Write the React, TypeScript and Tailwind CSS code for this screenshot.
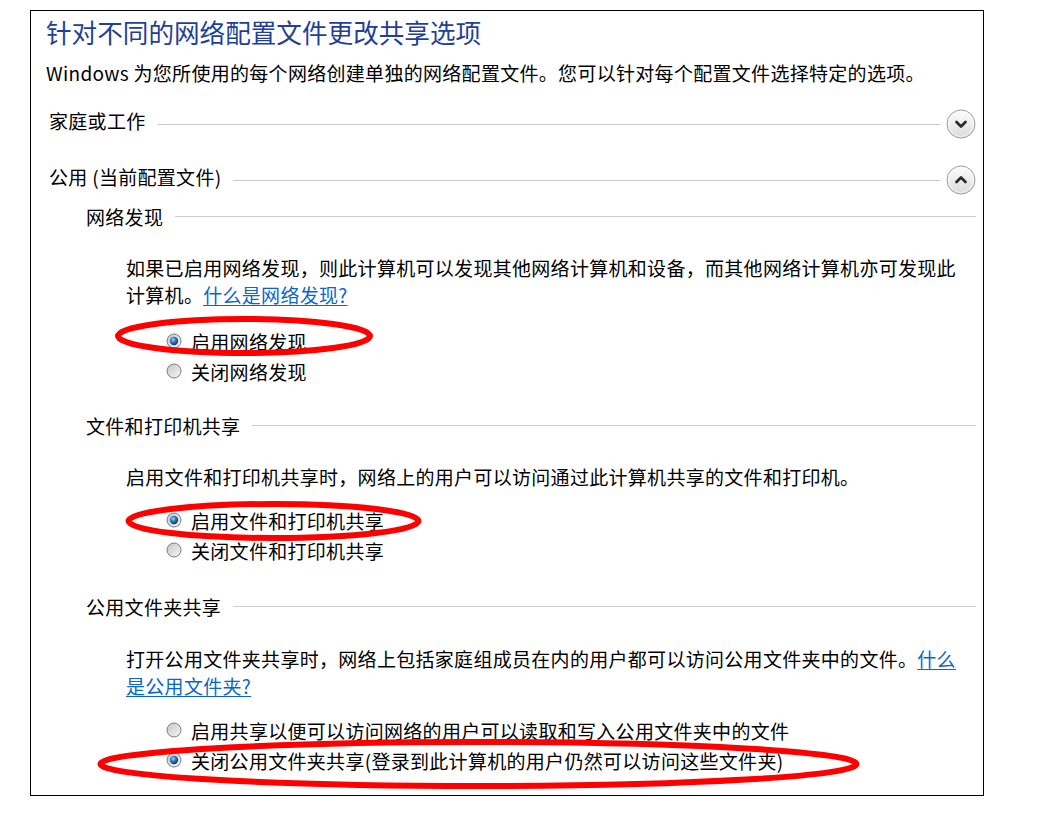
import React from 'react'

const font = { fontFamily: '"Noto Sans CJK SC", "Noto Sans", sans-serif' }

// 圆形折叠按钮
function Chevron({ up }: { up?: boolean }) {
    return (
        <svg width="30" height="30" viewBox="0 0 30 30" className="shrink-0">
            <defs>
                <linearGradient id={up ? 'cg-up' : 'cg-down'} x1="0" y1="0" x2="0" y2="1">
                    <stop offset="0" stopColor="#ffffff" />
                    <stop offset="1" stopColor="#d9d9d9" />
                </linearGradient>
            </defs>
            <circle cx="15" cy="15" r="14" fill={`url(#${up ? 'cg-up' : 'cg-down'})`} stroke="#9d9d9d" strokeWidth="1" />
            <circle cx="15" cy="15" r="12.5" fill="none" stroke="#ffffff" strokeWidth="1" opacity="0.8" />
            <path
                d={up ? 'M10.5 17 L15 12.5 L19.5 17' : 'M10.5 13 L15 17.5 L19.5 13'}
                fill="none"
                stroke="#2b2b2b"
                strokeWidth="2.8"
                strokeLinecap="round"
                strokeLinejoin="round"
            />
        </svg>
    )
}

function Radio({ checked }: { checked?: boolean }) {
    const id = checked ? 'rb-on' : 'rb-off'
    return (
        <svg width="16" height="16" viewBox="0 0 16 16" className="shrink-0">
            <defs>
                <linearGradient id={id} x1="0" y1="0" x2="1" y2="1">
                    <stop offset="0" stopColor="#c4c4c4" />
                    <stop offset="1" stopColor="#f8f8f8" />
                </linearGradient>
                <radialGradient id="rb-dot" cx="0.4" cy="0.35" r="0.7">
                    <stop offset="0" stopColor="#9ad6f7" />
                    <stop offset="0.45" stopColor="#2a7cbd" />
                    <stop offset="1" stopColor="#0b2f58" />
                </radialGradient>
            </defs>
            <circle cx="8" cy="8" r="7" fill={`url(#${id})`} stroke="#7c7c7c" strokeWidth="1" />
            {checked && <circle cx="8" cy="8" r="4.2" fill="url(#rb-dot)" />}
        </svg>
    )
}

function ProfileHeader({ label, up }: { label: string; up?: boolean }) {
    return (
        <div className="flex items-center h-[32px] pl-[3px]">
            <span className="leading-[27px] -mt-[8px]">{label}</span>
            <div className="flex-1 h-px bg-[#c9c9c9] ml-3 mr-[6px]" />
            <Chevron up={up} />
        </div>
    )
}

function SubHeader({ label, className }: { label: string; className?: string }) {
    return (
        <div className={`flex items-center h-[27px] pl-[40px] ${className ?? ''}`}>
            <span className="leading-[27px]">{label}</span>
            <div className="flex-1 h-px bg-[#cfcfcf] ml-3" />
        </div>
    )
}

function RadioRow({ label, checked }: { label: string; checked?: boolean }) {
    return (
        <div className="flex items-center h-[30px] pl-[120px] gap-[9px]">
            <Radio checked={checked} />
            <span className="leading-[27px] whitespace-nowrap">{label}</span>
        </div>
    )
}

export default function App() {
    return (
        <div className="relative w-[1063px] h-[834px] pt-[10px] bg-white text-black text-[19px] tracking-[0.3px]" style={font}>
            <div className="ml-[30px] w-[954px] h-[786px] border border-black">
                <div className="pl-[15px] pr-[7px] pt-[4px]">
                    <h1 className="text-[25.6px] leading-[34px] tracking-normal text-[#1f3f99] font-normal">针对不同的网络配置文件更改共享选项</h1>
                    <p className="mt-[10px] leading-[27px] whitespace-nowrap">
                        Windows 为您所使用的每个网络创建单独的网络配置文件。您可以针对每个配置文件选择特定的选项。
                    </p>

                    <div className="mt-[22px]">
                        <ProfileHeader label="家庭或工作" />
                    </div>
                    <div className="mt-[24px]">
                        <ProfileHeader label="公用 (当前配置文件)" up />
                    </div>

                    {/* 网络发现 */}
                    <SubHeader label="网络发现" className="mt-[7px]" />
                    <p className="mt-[24px] pl-[80px] leading-[27px] whitespace-nowrap">
                        如果已启用网络发现，则此计算机可以发现其他网络计算机和设备，而其他网络计算机亦可发现此
                        <br />
                        计算机。<span className="text-[#0a66c8] underline underline-offset-2">什么是网络发现?</span>
                    </p>
                    <div className="mt-[18px]">
                        <RadioRow label="启用网络发现" checked />
                        <RadioRow label="关闭网络发现" />
                    </div>

                    {/* 文件和打印机共享 */}
                    <SubHeader label="文件和打印机共享" className="mt-[26px]" />
                    <p className="mt-[24px] pl-[80px] leading-[27px] whitespace-nowrap">
                        启用文件和打印机共享时，网络上的用户可以访问通过此计算机共享的文件和打印机。
                    </p>
                    <div className="mt-[15px]">
                        <RadioRow label="启用文件和打印机共享" checked />
                        <RadioRow label="关闭文件和打印机共享" />
                    </div>

                    {/* 公用文件夹共享 */}
                    <SubHeader label="公用文件夹共享" className="mt-[28px]" />
                    <p className="mt-[25px] pl-[80px] leading-[27px] whitespace-nowrap">
                        打开公用文件夹共享时，网络上包括家庭组成员在内的用户都可以访问公用文件夹中的文件。
                        <span className="text-[#0a66c8] underline underline-offset-2">
                            什么
                            <br />
                            是公用文件夹?
                        </span>
                    </p>
                    <div className="mt-[16px]">
                        <RadioRow label="启用共享以便可以访问网络的用户可以读取和写入公用文件夹中的文件" />
                        <RadioRow label="关闭公用文件夹共享(登录到此计算机的用户仍然可以访问这些文件夹)" checked />
                    </div>
                </div>
            </div>

            {/* 红色标注圈 */}
            <svg className="absolute inset-0 pointer-events-none" width="1063" height="834">
                <ellipse cx="244" cy="336" rx="126" ry="17" fill="none" stroke="#ff0000" strokeWidth="6" />
                <ellipse cx="273.5" cy="521" rx="145" ry="17" fill="none" stroke="#ff0000" strokeWidth="6" />
                <ellipse cx="478.5" cy="764" rx="378" ry="22" fill="none" stroke="#ff0000" strokeWidth="6" />
            </svg>
        </div>
    )
}
